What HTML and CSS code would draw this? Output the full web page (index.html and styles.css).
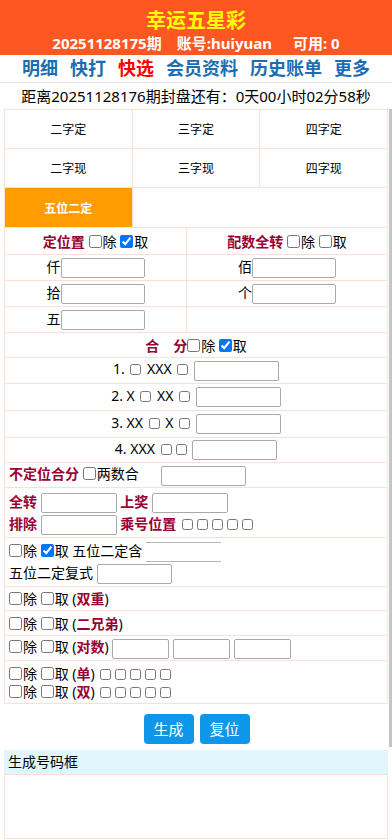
FILE: index.html
```html
<!DOCTYPE html>
<html lang="zh-CN">
<head>
<meta charset="utf-8">
<title>幸运五星彩</title>
<link rel="stylesheet" href="styles.css">
</head>
<body>
<div class="header">
  <div class="title">幸运五星彩</div>
  <div class="info"><span class="i1">20251128175期</span><span class="i2">账号:huiyuan</span><span>可用: 0</span></div>
</div>
<nav class="nav">
  <a href="#">明细</a><a href="#">快打</a><a href="#" class="hot">快选</a><a href="#">会员资料</a><a href="#">历史账单</a><a href="#">更多</a>
</nav>
<div class="countdown">距离20251128176期封盘还有：0天00小时02分58秒</div>

<div class="scroll">
  <table class="tabs">
    <tr><td>二字定</td><td>三字定</td><td>四字定</td></tr>
    <tr><td>二字现</td><td>三字现</td><td>四字现</td></tr>
    <tr><td class="on">五位二定</td><td colspan="2"></td></tr>
  </table>

  <table class="form">
    <tr class="r26"><td class="c lcol"><b class="red">定位置</b> <input type="checkbox" class="cb">除 <input type="checkbox" class="cb" checked>取</td><td class="c"><b class="red">配数全转</b> <input type="checkbox" class="cb">除 <input type="checkbox" class="cb">取</td></tr>
    <tr class="r26"><td class="c">仟<input class="txt w84"></td><td class="c">佰<input class="txt w84"></td></tr>
    <tr class="r26"><td class="c">拾<input class="txt w84"></td><td class="c">个<input class="txt w84"></td></tr>
    <tr class="r26"><td class="c">五<input class="txt w84"></td><td></td></tr>
    <tr class="r25"><td colspan="2" class="c"><b class="red">合　分</b><input type="checkbox" class="cb">除 <input type="checkbox" class="cb" checked>取</td></tr>
    <tr class="r26"><td colspan="2" class="c">1. <input type="checkbox" class="sm"> XXX <input type="checkbox" class="sm"> <input class="txt w85"></td></tr>
    <tr class="r27"><td colspan="2" class="c">2. X <input type="checkbox" class="sm"> XX <input type="checkbox" class="sm"> <input class="txt w85"></td></tr>
    <tr class="r27"><td colspan="2" class="c">3. XX <input type="checkbox" class="sm"> X <input type="checkbox" class="sm"> <input class="txt w85"></td></tr>
    <tr class="r25"><td colspan="2" class="c">4. XXX <input type="checkbox" class="sm"><input type="checkbox" class="sm"> <input class="txt w85"></td></tr>
    <tr class="r25"><td colspan="2" class="l"><b class="red">不定位合分</b> <input type="checkbox" class="cb">两数合<input class="txt w85 gapl"></td></tr>
    <tr><td colspan="2" class="l two">
      <div class="line"><b class="red">全转</b> <input class="txt w76"> <b class="red">上奖</b> <input class="txt w76"></div>
      <div class="line"><b class="red">排除</b> <input class="txt w76"> <b class="red">乘号位置</b> <input type="checkbox" class="sm"><input type="checkbox" class="sm"><input type="checkbox" class="sm"><input type="checkbox" class="sm"><input type="checkbox" class="sm"></div>
    </td></tr>
    <tr><td colspan="2" class="l two2">
      <div class="line"><input type="checkbox" class="cb">除 <input type="checkbox" class="cb" checked>取 五位二定含 <input class="txt w75 open"></div>
      <div class="line">五位二定复式 <input class="txt w75"></div>
    </td></tr>
    <tr class="r24"><td colspan="2" class="l"><input type="checkbox" class="cb">除 <input type="checkbox" class="cb">取 (<b class="red">双重</b>)</td></tr>
    <tr class="r25"><td colspan="2" class="l"><input type="checkbox" class="cb">除 <input type="checkbox" class="cb">取 (<b class="red">二兄弟</b>)</td></tr>
    <tr class="r25"><td colspan="2" class="l"><input type="checkbox" class="cb">除 <input type="checkbox" class="cb">取 (<b class="red">对数</b>) <input class="txt w56"> <input class="txt w56"> <input class="txt w56"></td></tr>
    <tr><td colspan="2" class="l dbl">
      <div class="sline"><input type="checkbox" class="cb">除 <input type="checkbox" class="cb">取 (<b class="red">单</b>) <input type="checkbox" class="sm"><input type="checkbox" class="sm"><input type="checkbox" class="sm"><input type="checkbox" class="sm"><input type="checkbox" class="sm"></div>
      <div class="sline"><input type="checkbox" class="cb">除 <input type="checkbox" class="cb">取 (<b class="red">双</b>) <input type="checkbox" class="sm"><input type="checkbox" class="sm"><input type="checkbox" class="sm"><input type="checkbox" class="sm"><input type="checkbox" class="sm"></div>
    </td></tr>
  </table>

  <div class="btns"><button class="btn">生成</button><button class="btn">复位</button></div>
</div>

<div class="result-title">生成号码框</div>
<div class="result-box"></div>
</body>
</html>
```

FILE: styles.css
```css
* { box-sizing: border-box; }

body {
  margin: 0;
  font-family: "Noto Sans", "Noto Sans CJK SC", sans-serif;
  font-size: 14px;
  color: #000;
  background: #fff;
}

.header {
  background: #ff5722;
  text-align: center;
  padding: 8px 0 3px;
}

.title {
  color: #ffff00;
  font-size: 20px;
  font-weight: 700;
  line-height: 26px;
}

.info {
  color: #fff;
  font-size: 15px;
  font-weight: 700;
  line-height: 18px;
}

.info .i1 { margin-right: 15px; }
.info .i2 { margin-right: 21px; }

.nav {
  display: flex;
  justify-content: center;
  gap: 12px;
  font-size: 18px;
  font-weight: 700;
  line-height: 27px;
  border-bottom: 1px solid #e8e8e8;
}

.nav a {
  color: #1c6db3;
  text-decoration: none;
}

.nav a.hot { color: #ff0000; }

.countdown {
  text-align: center;
  font-size: 15px;
  line-height: 26px;
}

.scroll {
  height: 638px;
  overflow-y: auto;
  padding: 0 0 6px 4px;
  border-right: 3px solid #c4c4c4;
}

.scroll::-webkit-scrollbar { width: 0; }

table {
  border-collapse: collapse;
  width: 384px;
}

td {
  border: 1px solid #fce0cf;
  padding: 0;
}

.tabs td {
  width: 128px;
  height: 39px;
  text-align: center;
  font-size: 12px;
}

.tabs td.on {
  height: 40px;
  background: #ff9c00;
  color: #fff;
  font-weight: 700;
}

.form tr:first-child td { border-top: 0; }

.form td.lcol { width: 182px; }

.r24 td { height: 24px; }
.r25 td { height: 25px; }
.r26 td { height: 26px; }
.r27 td { height: 27px; }

.c { text-align: center; }
.l { text-align: left; padding-left: 4px; }

.red { color: #990033; font-weight: 700; }

input { font-family: inherit; }

.txt {
  height: 20px;
  border: 1px solid #a9a9a9;
  border-radius: 2px;
  padding: 0 2px;
  vertical-align: middle;
  background: #fff;
}

.txt.open {
  border-left: 0;
  border-right: 0;
  border-color: #b5b5b5;
  border-radius: 0;
}

.w84 { width: 84px; }
.w85 { width: 85px; }
.w76 { width: 76px; }
.w75 { width: 75px; }
.w56 { width: 57px; }
.gapl { margin-left: 22px; }

.cb {
  width: 13px;
  height: 13px;
  margin: 0 1px 0 0;
  vertical-align: -1px;
}

.sm {
  width: 11px;
  height: 11px;
  margin: 0 2px;
  vertical-align: -1px;
}

.two { height: 50px; padding-top: 2px; }
.two2 { height: 49px; padding-top: 1px; }

.line { line-height: 22px; height: 22px; }

.dbl { height: 43px; padding-top: 2px; }
.sline { line-height: 18px; height: 18px; }

.btns {
  display: flex;
  justify-content: center;
  gap: 6px;
  margin-top: 10px;
}

.btn {
  width: 50px;
  height: 30px;
  border: 0;
  border-radius: 4px;
  background: #0e97e8;
  color: #fff;
  font-family: inherit;
  font-size: 15px;
  padding: 0;
}

.result-title {
  margin: 3px 0 0 4px;
  width: 384px;
  height: 25px;
  background: #e1f5fd;
  border-bottom: 1px solid #fce0cf;
  font-size: 14px;
  line-height: 24px;
  padding-left: 4px;
}

.result-box {
  margin-left: 4px;
  width: 384px;
  height: 64px;
  border: 1px solid #fce0cf;
  border-top: 0;
}
```
